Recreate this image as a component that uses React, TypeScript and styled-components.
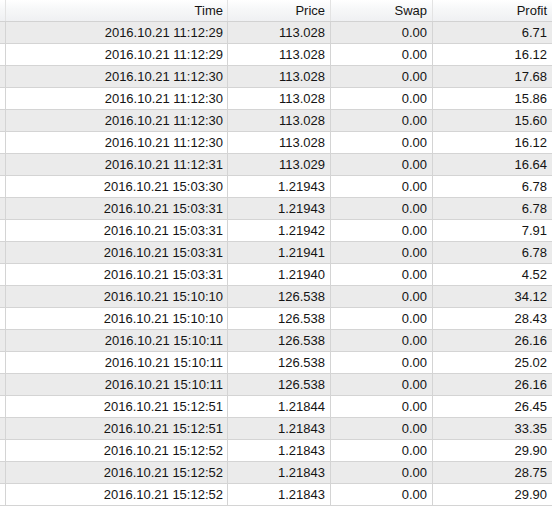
import React from 'react';
import styled, { createGlobalStyle } from 'styled-components';

const GlobalStyle = createGlobalStyle`
  html, body {
    margin: 0;
    padding: 0;
    background: #ffffff;
    overflow: hidden;
  }
`

const rows: [string, string, string, string][] = [
  ['2016.10.21 11:12:29', '113.028', '0.00', '6.71'],
  ['2016.10.21 11:12:29', '113.028', '0.00', '16.12'],
  ['2016.10.21 11:12:30', '113.028', '0.00', '17.68'],
  ['2016.10.21 11:12:30', '113.028', '0.00', '15.86'],
  ['2016.10.21 11:12:30', '113.028', '0.00', '15.60'],
  ['2016.10.21 11:12:30', '113.028', '0.00', '16.12'],
  ['2016.10.21 11:12:31', '113.029', '0.00', '16.64'],
  ['2016.10.21 15:03:30', '1.21943', '0.00', '6.78'],
  ['2016.10.21 15:03:31', '1.21943', '0.00', '6.78'],
  ['2016.10.21 15:03:31', '1.21942', '0.00', '7.91'],
  ['2016.10.21 15:03:31', '1.21941', '0.00', '6.78'],
  ['2016.10.21 15:03:31', '1.21940', '0.00', '4.52'],
  ['2016.10.21 15:10:10', '126.538', '0.00', '34.12'],
  ['2016.10.21 15:10:10', '126.538', '0.00', '28.43'],
  ['2016.10.21 15:10:11', '126.538', '0.00', '26.16'],
  ['2016.10.21 15:10:11', '126.538', '0.00', '25.02'],
  ['2016.10.21 15:10:11', '126.538', '0.00', '26.16'],
  ['2016.10.21 15:12:51', '1.21844', '0.00', '26.45'],
  ['2016.10.21 15:12:51', '1.21843', '0.00', '33.35'],
  ['2016.10.21 15:12:52', '1.21843', '0.00', '29.90'],
  ['2016.10.21 15:12:52', '1.21843', '0.00', '28.75'],
  ['2016.10.21 15:12:52', '1.21843', '0.00', '29.90'],
]

const headers = ['Time', 'Price', 'Swap', 'Profit']

// column widths incl. the 1px right border, matching the terminal grid
const COLUMNS = '3px 225px 103px 102px 120px'

function App() {
  return (
    <>
      <GlobalStyle />
      <Grid>
        <HeaderRow>
          <HeaderCell />
          {headers.map(h => (
            <HeaderCell key={h}>{h}</HeaderCell>
          ))}
        </HeaderRow>
        {rows.map((r, i) => (
          <Row key={i} $shaded={i % 2 === 0}>
            <Cell />
            {r.map((v, j) => (
              <Cell key={j} $first={j === 0}>{v}</Cell>
            ))}
          </Row>
        ))}
      </Grid>
    </>
  )
}


const Grid = styled.div`
  width: 552px;
  font-family: "Liberation Sans", Arial, sans-serif;
  font-size: 13px;
  color: #141414;
`


const HeaderRow = styled.div`
  display: grid;
  grid-template-columns: ${COLUMNS};
  height: 22px;
  box-sizing: border-box;
  border-bottom: 1px solid #d2d2d2;
  background: linear-gradient(180deg, #ffffff 0%, #f7f8f9 40%, #eff0f2 100%);
`


const HeaderCell = styled.div`
  box-sizing: border-box;
  border-right: 1px solid #e3e3e3;
  text-align: right;
  padding-right: 5px;
  line-height: 21px;
  white-space: nowrap;
  overflow: hidden;

  &:nth-child(2) {
    padding-right: 4px;
  }
`


const Row = styled.div<{ $shaded: boolean }>`
  display: grid;
  grid-template-columns: ${COLUMNS};
  height: 22px;
  box-sizing: border-box;
  border-bottom: 1px solid #d4d4d4;
  background: ${p => (p.$shaded ? '#ebebeb' : '#ffffff')};
`


const Cell = styled.div<{ $first?: boolean }>`
  box-sizing: border-box;
  border-right: 1px solid #d4d4d4;
  text-align: right;
  padding-right: ${p => (p.$first ? '4px' : '5px')};
  line-height: 21px;
  white-space: nowrap;
  overflow: hidden;
`


export default App
